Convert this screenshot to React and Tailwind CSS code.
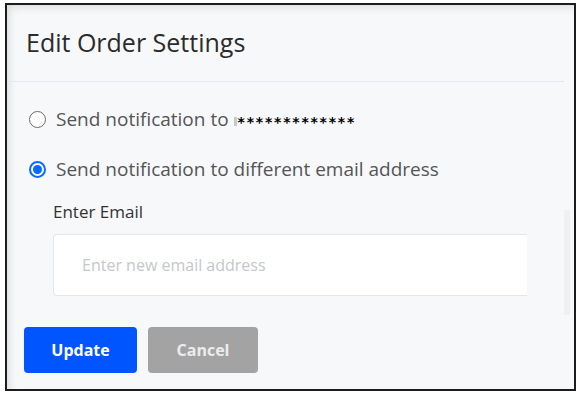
import React from "react";

function Radio({ checked }) {
  return checked ? (
    <span className="w-[17px] h-[17px] shrink-0 rounded-full border-2 border-[#0a6cff] flex items-center justify-center bg-white">
      <span className="w-[9px] h-[9px] rounded-full bg-[#0a6cff]"></span>
    </span>
  ) : (
    <span className="w-[17px] h-[17px] shrink-0 rounded-full border border-[#6b6b6b] bg-white"></span>
  );
}

export default function App() {
  return (
    <div className="w-[580px] h-[394px] bg-white pt-[3px] pl-[5px] font-['Open_Sans',sans-serif]">
      <div className="w-[571px] h-[388px] border-2 border-[#1c1c1c] bg-[#f7f8fa] flex shadow-[inset_6px_6px_8px_-4px_rgba(0,0,0,0.12)]">
        <div className="w-[557px] flex flex-col">
          <div className="h-[77px] border-b border-[#e6e8ef] flex items-center pl-[19px]">
            <h1 className="text-[25px] text-[#2b2b2b]">Edit Order Settings</h1>
          </div>

          <div className="pl-[22px] pt-[22px]">
            <label className="flex items-center gap-[10px] h-[30px]">
              <Radio />
              <span className="text-[19px] text-[#555] flex items-center whitespace-nowrap">
                Send notification to&nbsp;
                <span className="inline-block w-[3px] h-[9px] mt-[5px] bg-[#c8c8c8] mr-[1px]"></span>
                <span className="font-['DejaVu_Sans',sans-serif] font-bold text-[14px] text-black tracking-[1.8px] mt-[6px]">
                  *************
                </span>
              </span>
            </label>
            <label className="flex items-center gap-[10px] h-[30px] mt-[20px]">
              <Radio checked />
              <span className="text-[19px] text-[#555] whitespace-nowrap">Send notification to different email address</span>
            </label>

            <div className="pl-[24px] mt-[16px]">
              <div className="text-[17px] text-[#333] h-[24px] flex items-center">Enter Email</div>
              <div className="mt-[10px] w-[474px] h-[62px] bg-white border border-r-0 border-[#e3e6ee] rounded-l-[4px] flex items-center pl-[28px]">
                <span className="text-[16px] text-[#c4c7cc]">Enter new email address</span>
              </div>
            </div>
          </div>

          <div className="flex gap-[11px] pl-[17px] mt-[31px]">
            <button className="w-[113px] h-[46px] rounded-[4px] bg-[#0055ff] text-white font-bold text-[16px]">
              Update
            </button>
            <button className="w-[110px] h-[46px] rounded-[4px] bg-[#a3a3a3] text-[#ececec] font-bold text-[16px]">
              Cancel
            </button>
          </div>
        </div>
        <div className="flex-1 flex flex-col">
          <div className="h-[205px]"></div>
          <div className="h-[105px] w-[6px] bg-[#eef0f3]"></div>
        </div>
      </div>
    </div>
  );
}
